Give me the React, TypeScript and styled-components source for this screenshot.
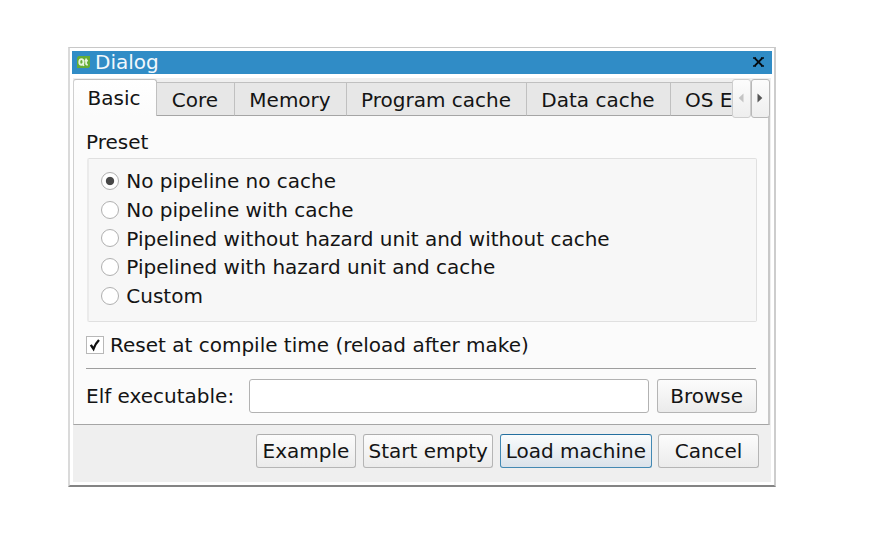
import React, { useState } from 'react';
import styled, { createGlobalStyle } from 'styled-components';

const Global = createGlobalStyle`
  * { box-sizing: border-box; }
  body { margin: 0; background: #fff; }
`;

const Desktop = styled.main`
  width: 889px;
  height: 540px;
  padding: 47px 0 0 68px;
  overflow: hidden;
  background: #fff;
  color: #141414;
  font: 20px/24px "DejaVu Sans", sans-serif;
  white-space: nowrap;
`;

const Window = styled.section`
  width: 708px;
  height: 440px;
  padding: 3px 2px 3px 2px;
  border: 1px solid #c8c8c8;
  border-left: 2px solid #dadada;
  border-right: 2px solid #cdcdcd;
  border-bottom: 2px solid #848484;
  background: #fff;
`;

const TitleBar = styled.header`
  display: flex;
  align-items: center;
  width: 700px;
  height: 23px;
  padding: 0 7px 1px 5px;
  background: #308cc6;
  color: #f2f8fc;
  svg { display: block; flex: none; }
`;

const Title = styled.span`
  flex: 1;
  margin-left: 5px;
  line-height: 22px;
`;

const Client = styled.div`
  display: flex;
  flex-direction: column;
  width: 698px;
  height: 408px;
  margin-left: 1px;
  padding: 4px 0 0;
  background: linear-gradient(#fff 4px, #efefef 4px);
`;

const TabRow = styled.nav`
  display: flex;
  align-items: flex-end;
  height: 38px;
  padding-top: 1px;
`;

const Tabs = styled.div`
  display: flex;
  align-items: flex-end;
  width: 659px;
  height: 37px;
  overflow: hidden;
`;

const Tab = styled.button<{ $width: number; $active?: boolean; $clipped?: boolean }>`
  flex: none;
  width: ${p => p.$width}px;
  height: ${p => (p.$active ? 37 : 34)}px;
  padding: ${p => (p.$active ? '0 2px 1px 0' : '1px 1px 0 0')};
  ${p => p.$clipped && 'padding-left: 14px; text-align: left;'}
  border: 1px solid #c0c0c0;
  border-left: ${p => (p.$active ? '1px solid #d0d0d0' : '0')};
  border-bottom: ${p => (p.$active ? '0' : '1px solid #a5a5a5')};
  border-radius: ${p => (p.$active ? '3px 3px 0 0' : '0')};
  background: ${p => (p.$active ? 'linear-gradient(#fff, #fbfbfb)' : '#e7e7e7')};
  color: inherit;
  font: inherit;
  white-space: nowrap;
`;

const Scrollers = styled.div`
  position: relative;
  z-index: 1;
  display: flex;
  align-self: flex-start;
  height: 39px;
`;

const ScrollButton = styled.button`
  display: grid;
  place-items: center;
  width: 19px;
  height: 39px;
  padding: 0 2px 2px 0;
  border: 1px solid #b8b8b8;
  border-radius: 3px;
  background: linear-gradient(#fcfcfc, #eee);
  &:disabled { border-color: #cecece; }
`;

const Page = styled.div`
  display: flex;
  flex-direction: column;
  width: 697px;
  height: 309px;
  padding: 14px 12px 0 12px;
  border: solid #a5a5a5;
  border-width: 0 2px 1px 1px;
  border-left-color: #d0d0d0;
  border-right-color: #c8c8c8;
  background: #fbfbfb;
`;

const GroupLabel = styled.div`
  height: 28px;
`;

const Group = styled.div`
  display: grid;
  grid-auto-rows: 28.7px;
  align-items: center;
  width: 670px;
  height: 164px;
  margin-left: 1px;
  padding: 8px 0 0 12px;
  border: 1px solid #e0e0e0;
  border-left: 2px solid #ebebeb;
  border-radius: 2px;
  background: #f7f7f7;
`;

const Choice = styled.label`
  display: flex;
  align-items: center;
  gap: 7.3px;
`;

const Radio = styled.input`
  appearance: none;
  flex: none;
  width: 18px;
  height: 18px;
  margin: 0 0 0.6px;
  border: 1.3px solid #b0b0b0;
  border-radius: 50%;
  background: #fff;
  &:checked { background: radial-gradient(circle, #484848 3.7px, #fff 4.6px); }
`;

const ResetRow = styled.label`
  display: flex;
  align-items: center;
  gap: 6px;
  height: 24px;
  margin-top: 11px;
`;

const Box = styled.span`
  display: grid;
  place-items: center;
  width: 18px;
  height: 18px;
  margin-bottom: 1px;
  border: 1px solid #b8b8b8;
  background: #fff;
`;

const Rule = styled.hr`
  flex: none;
  width: 670px;
  height: 1px;
  margin: 11px 0 10px;
  border: 0;
  background: #9e9e9e;
`;

const FileRow = styled.div`
  display: flex;
  align-items: center;
  height: 34px;
`;

const FileLabel = styled.label`
  flex: none;
  width: 162.6px;
`;

const PathInput = styled.input`
  flex: none;
  width: 400px;
  height: 34px;
  margin-right: 8px;
  border: 1px solid #b2b2b2;
  border-radius: 3px;
  background: #fff;
  font: inherit;
`;

const Button = styled.button<{ $width: number; $primary?: boolean }>`
  flex: none;
  width: ${p => p.$width}px;
  height: 34px;
  padding: 0 0 1px;
  border: 1px solid ${p => (p.$primary ? '#4389b3' : '#b5b5b5')};
  border-top-color: ${p => (p.$primary ? '#246f9f' : '#adadad')};
  border-radius: 3px;
  background: ${p => (p.$primary ? 'linear-gradient(#fafcfd, #dae2ea)' : 'linear-gradient(#fcfcfc, #ebebeb)')};
  color: inherit;
  font: inherit;
  white-space: nowrap;
`;

const Footer = styled.footer`
  display: flex;
  justify-content: flex-end;
  gap: 6.9px;
  padding: 9px 12.3px 0 0;
`;

const tabs = [
  { label: 'Basic', width: 84 },
  { label: 'Core', width: 78 },
  { label: 'Memory', width: 112 },
  { label: 'Program cache', width: 180 },
  { label: 'Data cache', width: 144 },
  { label: 'OS E', width: 80, clipped: true },
];

const presets = [
  'No pipeline no cache',
  'No pipeline with cache',
  'Pipelined without hazard unit and without cache',
  'Pipelined with hazard unit and cache',
  'Custom',
];

const QtIcon = () => (
  <svg width="13" height="12" viewBox="0 0 13 12">
    <path d="M1.5 0H13v10.5L11.5 12H0V1.5z" fill="#65ad35" />
    <ellipse cx="4.4" cy="5.9" rx="2.1" ry="2.8" fill="none" stroke="#e8f4df" strokeWidth="1.9" />
    <path d="M5 7.5l2 2.2M9.1 2.6v5.2q0 1.1 1.7.8M7.7 4.7h3.2" fill="none" stroke="#e8f4df" strokeWidth="1.7" />
  </svg>
);

const CloseIcon = () => (
  <svg width="13" height="12" viewBox="0 0 13 12">
    <path d="M2.7 2.1l7.6 7.8M10.3 2.1L2.7 9.9" stroke="#050b10" strokeWidth="2" />
    <path d="M1 2h3M9 2h3M1 10h3M9 10h3" stroke="#050b10" strokeWidth="1.4" />
  </svg>
);

export default function App() {
  const [preset, setPreset] = useState(0);
  const [tab, setTab] = useState(0);
  const [reset, setReset] = useState(true);
  return (
    <>
      <Global />
      <Desktop>
        <Window>
          <TitleBar>
            <QtIcon />
            <Title>Dialog</Title>
            <CloseIcon />
          </TitleBar>
          <Client>
            <TabRow>
              <Tabs>
                {tabs.map((t, i) => (
                  <Tab
                    key={t.label}
                    $width={t.width}
                    $active={i === tab}
                    $clipped={t.clipped}
                    onClick={() => setTab(i)}
                  >
                    {t.label}
                  </Tab>
                ))}
              </Tabs>
              <Scrollers>
                <ScrollButton disabled aria-label="Scroll left">
                  <svg width="6" height="10" viewBox="0 0 6 10"><path d="M5.5 .5v9L.7 5z" fill="#c4c4c4" /></svg>
                </ScrollButton>
                <ScrollButton aria-label="Scroll right">
                  <svg width="6" height="10" viewBox="0 0 6 10"><path d="M.5 .5v9L5.3 5z" fill="#555" /></svg>
                </ScrollButton>
              </Scrollers>
            </TabRow>
            <Page>
              <GroupLabel>Preset</GroupLabel>
              <Group>
                {presets.map((name, i) => (
                  <Choice key={name}>
                    <Radio type="radio" name="preset" checked={i === preset} onChange={() => setPreset(i)} />
                    <span>{name}</span>
                  </Choice>
                ))}
              </Group>
              <ResetRow onClick={() => setReset(!reset)}>
                <Box>
                  {reset && (
                    <svg width="14" height="14" viewBox="0 0 14 14">
                      <path d="M2.8 6.8l2.7 4Q7.5 5.5 11 2" fill="none" stroke="#101010" strokeWidth="2.4" />
                    </svg>
                  )}
                </Box>
                <span>Reset at compile time (reload after make)</span>
              </ResetRow>
              <Rule />
              <FileRow>
                <FileLabel htmlFor="elf">Elf executable:</FileLabel>
                <PathInput id="elf" />
                <Button $width={100}>Browse</Button>
              </FileRow>
            </Page>
            <Footer>
              <Button $width={100.3}>Example</Button>
              <Button $width={130.3}>Start empty</Button>
              <Button $width={151.3} $primary>Load machine</Button>
              <Button $width={100.3}>Cancel</Button>
            </Footer>
          </Client>
        </Window>
      </Desktop>
    </>
  );
}
